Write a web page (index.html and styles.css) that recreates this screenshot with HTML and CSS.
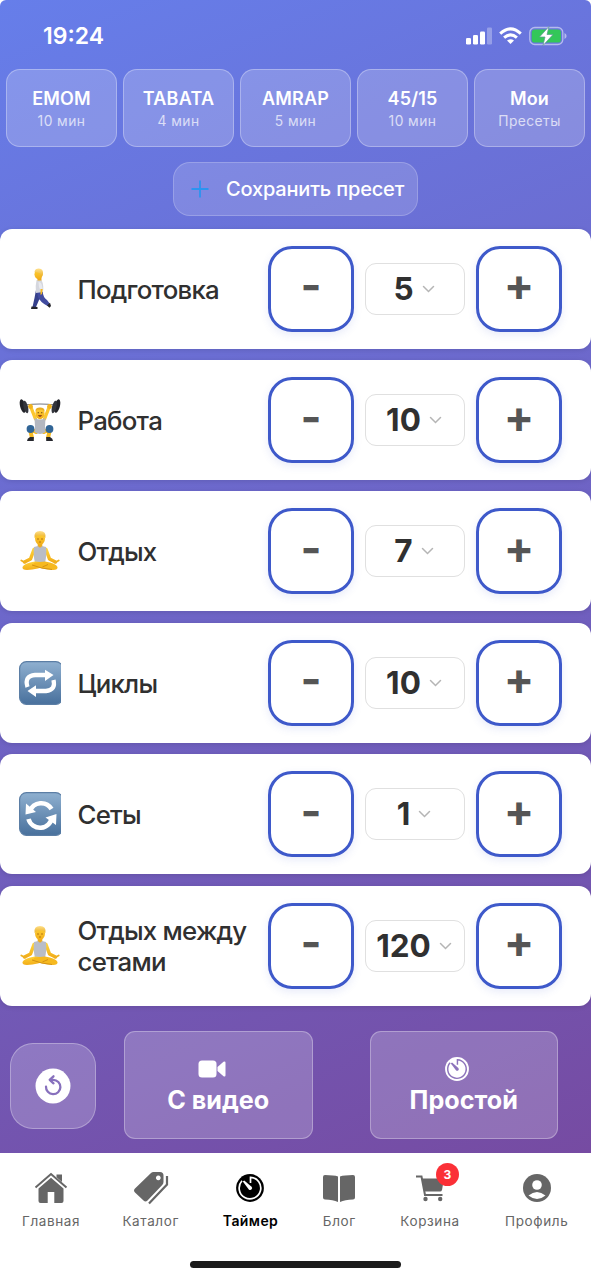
FILE: index.html
```html
<!DOCTYPE html>
<html lang="ru">
<head>
<meta charset="utf-8">
<title>Таймер</title>
<link rel="stylesheet" href="styles.css">
</head>
<body>
<svg class="defs" width="0" height="0" aria-hidden="true">
  <defs>
    <linearGradient id="blue" x1="0" y1="0" x2="0" y2="1"><stop offset="0" stop-color="#8fb0d0"/><stop offset="1" stop-color="#48709c"/></linearGradient>
    <linearGradient id="skin" x1="0" y1="0" x2="0" y2="1"><stop offset="0" stop-color="#ffd238"/><stop offset="1" stop-color="#f2ad18"/></linearGradient>
    <linearGradient id="hair" x1="0" y1="0" x2="0" y2="1"><stop offset="0" stop-color="#ffe08a"/><stop offset="1" stop-color="#e9ad22"/></linearGradient>
    <symbol id="walk" viewBox="0 0 42 42">
      <path d="M17 22 H23.500 Q24 28 20 32 L17 39 H13.500 L15.500 30 Z" fill="#35408c"/>
      <path d="M18 24 H23.700 Q24 29 28 32 L31 36 L28.500 38 Q21 34 19 29 Z" fill="#414b9f"/>
      <path d="M12.500 38.500 L18.500 39 V41 H12 Z M28 37.500 L31 34.800 L32 38 L30.500 39.800 Z" fill="#25252b"/>
      <path d="M17.500 12.500 Q20 10 22.500 12 Q25 17 24 24 L17 25 Q16 18 17.500 12.500Z" fill="#d5d7de"/>
      <path d="M19.500 14 Q22.500 14 23 18 L24 23 L21.500 23 L20 19 Z" fill="#e8e9ee"/>
      <path d="M21.500 21 H23.700 L23 26 L21.500 27 Z" fill="#f4b822"/>
      <rect x="18.500" y="9" width="4" height="3.500" fill="#eda91c"/>
      <ellipse cx="19.500" cy="6.200" rx="4" ry="5" fill="url(#skin)"/>
      <path d="M15.500 4 Q16 .5 20 .6 Q24.500 1 24 6 Q23.700 8 22.500 9 L21.200 5.500 L18 4.300 Z" fill="url(#hair)"/>
    </symbol>
    <symbol id="lift" viewBox="0 0 42 42">
      <path d="M5 6 Q21 4 37 6" fill="none" stroke="#747780" stroke-width="1.200"/>
      <path d="M12 8.500 L16.500 20 M30 8.500 L25.500 20" fill="none" stroke="#fcc72e" stroke-width="3.400" stroke-linecap="round"/>
      <path d="M17 33 L11 30 L13 39 M25 33 L31 30 L29 39" fill="none" stroke="#f6b91f" stroke-width="4" stroke-linecap="round" stroke-linejoin="round"/>
      <path d="M15.500 19 Q21 22 26.500 19 L26 28 L26.500 33 Q21 37 15.500 33 L16 28Z" fill="#b3b7c0"/>
      <circle cx="11.500" cy="30" r="3.900" fill="#316596"/><circle cx="30.500" cy="30" r="3.900" fill="#316596"/>
      <ellipse cx="21" cy="14.500" rx="4.600" ry="5.700" fill="url(#skin)"/>
      <path d="M16.500 12.500 Q16 8.500 21 8.400 Q26 8.500 25.500 12.500 L23 10.800 H18.500Z" fill="#e9ad22"/>
      <path d="M18.800 16 Q21 20 23.200 16Z" fill="#9a4a18"/><circle cx="19.200" cy="13.700" r=".6" fill="#5d3a12"/><circle cx="22.800" cy="13.700" r=".6" fill="#5d3a12"/>
      <circle cx="11.500" cy="7.500" r="2.400" fill="#f1b31e"/><circle cx="30.500" cy="7.500" r="2.400" fill="#f1b31e"/>
      <ellipse cx="3.800" cy="7" rx="2.700" ry="7" transform="rotate(-14 3.800 7)" fill="#222329"/><ellipse cx="6.800" cy="8" rx="2.200" ry="6.500" transform="rotate(-14 6.800 8)" fill="#33353c"/>
      <ellipse cx="38.200" cy="7" rx="2.700" ry="7" transform="rotate(14 38.200 7)" fill="#222329"/><ellipse cx="35.200" cy="8" rx="2.200" ry="6.500" transform="rotate(14 35.200 8)" fill="#33353c"/>
      <path d="M8 42 Q8 39.500 11 38 H14.800 V42Z M34 42 Q34 39.500 31 38 H27.200 V42Z" fill="#26272d"/>
    </symbol>
    <symbol id="yoga" viewBox="0 0 42 42">
      <path d="M15 19.500 L11.500 29 L5.500 32 M27 19.500 L30.500 29 L36.500 32" fill="none" stroke="url(#skin)" stroke-width="3.500" stroke-linecap="round" stroke-linejoin="round"/>
      <path d="M2.300 30.500 L6 32.500 M39.700 30.500 L36 32.500" stroke="#eeb020" stroke-width="1.800" stroke-linecap="round"/>
      <rect x="18.700" y="12" width="4.600" height="6" fill="#eeac1d"/>
      <path d="M15 17 L19 16 Q21 19 23 16 L27 17 Q28 24 26 33 H16 Q14 24 15 17Z" fill="#b9bdc7"/>
      <path d="M16 31.500 Q5 33 3.500 37 Q3 40 8 40 Q19 39.500 29 35 L26 32.500 Z" fill="url(#skin)"/>
      <path d="M26 31.500 Q37 33 38.500 37 Q39 40 34 40 Q23 39.500 13 35 L16 32.500 Z" fill="#f6b91f"/>
      <path d="M13 35 Q23 39 33 39.500 M29 34.500 Q26 36 23.500 36.800" fill="none" stroke="#c98712" stroke-width=".8"/>
      <ellipse cx="21" cy="8.500" rx="5" ry="6.300" fill="url(#skin)"/>
      <path d="M15.600 8 Q14.500 1 21 1 Q27.500 1 26.400 8 L24 5.500 H18Z" fill="url(#hair)"/>
      <path d="M18 9 H20 M22 9 H24 M20 12 H22" stroke="#a5660f" stroke-width=".8"/>
    </symbol>
    <symbol id="repeat" viewBox="0 0 42 44">
      <rect x=".6" y=".6" width="43" height="42.800" rx="7" fill="url(#blue)" stroke="#5b7ea5" stroke-width="1.200"/>
      <path d="M8.500 26 Q5 15 16 14 H27 M34.500 19 Q37 29 27 30 H16" fill="none" stroke="#fff" stroke-width="4.300"/>
      <path d="M26 8.700 L34.500 14 L26 20Z M17 24.200 L8.500 30 L17 36Z" fill="#fff"/>
    </symbol>
    <symbol id="cycle" viewBox="0 0 42 44">
      <rect x=".6" y=".6" width="43" height="42.800" rx="7" fill="url(#blue)" stroke="#5b7ea5" stroke-width="1.200"/>
      <path d="M11 19 A12 12 0 0 1 32.500 17 M33 25 A12 12 0 0 1 9.500 27" fill="none" stroke="#fff" stroke-width="4.600"/>
      <path d="M7 11.500 L6.500 22.500 L17 20Z M37.500 22 L26.500 25.500 L37 33Z" fill="#fff"/>
    </symbol>
    <symbol id="chev" viewBox="0 0 12 8"><path d="M1 1.500 L6 6.500 L11 1.500" fill="none" stroke="#b5b5b5" stroke-width="1.500" stroke-linecap="round"/></symbol>
    <symbol id="dial" viewBox="0 0 28 28">
      <circle class="face" cx="14" cy="14" r="13.900"/>
      <path class="mark" d="M14.500 9 V3.300 A10.800 10.800 0 1 1 6 6.800" fill="none" stroke-width="1.700"/>
      <path class="hand" d="M6.800 7.600 L8.200 6.500 L15.600 12.700 A2 2 0 0 1 13 15.700Z"/>
    </symbol>
  </defs>
</svg>

<main class="screen">
  <header class="status">
    <span class="time">19:24</span>
    <div class="indicators">
      <svg width="27" height="18" viewBox="0 0 27 18" fill="#fff"><rect x="0" y="11" width="5" height="6.500" rx="1.300"/><rect x="7" y="8" width="5" height="9.500" rx="1.300"/><rect x="14" y="4.500" width="5" height="13" rx="1.300"/><rect x="21" y=".5" width="5" height="17" rx="1.300" opacity=".3"/></svg>
      <svg width="23" height="18" viewBox="0 0 23 18" fill="none" stroke="#fff" stroke-width="3"><path d="M1.200 6.600 Q11.500 -2.800 21.800 6.600"/><path d="M5.100 10.700 Q11.500 5 17.900 10.700"/><path d="M11.500 17 L8 13.600 Q11.500 10.800 15 13.600Z" fill="#fff" stroke="none"/></svg>
      <svg width="38" height="20" viewBox="0 0 38 20"><rect x=".8" y="1.500" width="33" height="17" rx="5" fill="none" stroke="#fff" stroke-opacity=".5" stroke-width="1.300"/><rect x="2.700" y="3.400" width="29.200" height="13.200" rx="3.200" fill="#33c759"/><path d="M35.500 7 Q37.600 8 37.600 10 Q37.600 12 35.500 13Z" fill="#fff" opacity=".5"/><path d="M20 .5 L10.500 11 H16 L14 19.500 L24 8.500 H18Z" fill="#fff" stroke="#5b9a93" stroke-width=".7"/></svg>
    </div>
  </header>

  <section class="presets">
    <button class="preset"><b>EMOM</b><span>10 мин</span></button>
    <button class="preset"><b>TABATA</b><span>4 мин</span></button>
    <button class="preset"><b>AMRAP</b><span>5 мин</span></button>
    <button class="preset"><b>45/15</b><span>10 мин</span></button>
    <button class="preset"><b>Мои</b><span>Пресеты</span></button>
  </section>

  <button class="save"><svg width="18" height="18" viewBox="0 0 18 18"><path d="M9 .5 V17.500 M.5 9 H17.500" stroke="#2b94f0" stroke-width="1.800"/></svg><span>Сохранить пресет</span></button>

  <section class="cards">
    <div class="card"><svg class="emoji"><use href="#walk"/></svg><span class="label">Подготовка</span><button class="step">-</button><div class="value"><b>5</b><svg><use href="#chev"/></svg></div><button class="step">+</button></div>
    <div class="card"><svg class="emoji"><use href="#lift"/></svg><span class="label">Работа</span><button class="step">-</button><div class="value"><b>10</b><svg><use href="#chev"/></svg></div><button class="step">+</button></div>
    <div class="card"><svg class="emoji"><use href="#yoga"/></svg><span class="label">Отдых</span><button class="step">-</button><div class="value"><b>7</b><svg><use href="#chev"/></svg></div><button class="step">+</button></div>
    <div class="card"><svg class="emoji tile"><use href="#repeat"/></svg><span class="label">Циклы</span><button class="step">-</button><div class="value"><b>10</b><svg><use href="#chev"/></svg></div><button class="step">+</button></div>
    <div class="card"><svg class="emoji tile"><use href="#cycle"/></svg><span class="label">Сеты</span><button class="step">-</button><div class="value"><b>1</b><svg><use href="#chev"/></svg></div><button class="step">+</button></div>
    <div class="card"><svg class="emoji"><use href="#yoga"/></svg><span class="label">Отдых между сетами</span><button class="step">-</button><div class="value"><b>120</b><svg><use href="#chev"/></svg></div><button class="step">+</button></div>
  </section>

  <section class="actions">
    <button class="reset"><svg width="36" height="36" viewBox="0 0 36 36"><circle cx="18" cy="18" r="17.500" fill="#fff"/><path d="M11 18.600 A7.200 7.200 0 1 0 18.200 11.800 H15.500" fill="none" stroke="#8770bd" stroke-width="2.300" stroke-linecap="round"/><path d="M18.500 8.300 L14.700 11.800 L18.500 15.300" fill="none" stroke="#8770bd" stroke-width="2.300" stroke-linecap="round" stroke-linejoin="round"/></svg></button>
    <button class="start"><svg width="28" height="24" viewBox="0 0 28 24" fill="#fff"><rect x=".5" y="3.500" width="18" height="17" rx="3.500"/><path d="M19.500 10 L25.500 4.800 Q27.500 3.800 27.500 5.800 V18.200 Q27.500 20.200 25.500 19.200 L19.500 14Z"/></svg><span>С видео</span></button>
    <button class="start second"><svg class="dial" width="24" height="24"><use href="#dial"/></svg><span>Простой</span></button>
  </section>
</main>

<nav class="tabs">
  <a class="tab"><svg width="34" height="32" viewBox="0 0 34 32" fill="#666"><path d="M1.500 15.500 L17 2 L32.500 15.500" fill="none" stroke="#666" stroke-width="2"/><path d="M22.500 2.500 H28 V10 L22.500 5.200Z"/><path d="M17 5.800 L29.500 16.500 V29 Q29.500 31 27.500 31 H20.300 V20 H13.700 V31 H6.500 Q4.500 31 4.500 29 V16.500Z"/></svg><span>Главная</span></a>
  <a class="tab"><svg width="36" height="34" viewBox="0 0 36 34"><path fill="#666" fill-rule="evenodd" d="M18 2 Q19 1 20.500 1 H27 Q30.500 1 30.500 4.500 V11 Q30.500 13 29 14.300 L14.500 29.500 Q12.500 31.500 10.500 29.500 L2 21.500 Q0 19.500 2 17.500Z M25.300 4.500 a2.400 2.400 0 1 0 .01 0Z"/><path d="M34 5 V13.500 L16 32.500" fill="none" stroke="#666" stroke-width="2.200"/></svg><span>Каталог</span></a>
  <a class="tab active"><svg class="dial" width="28" height="28"><use href="#dial"/></svg><span>Таймер</span></a>
  <a class="tab"><svg width="34" height="30" viewBox="0 0 34 30" fill="#666"><path d="M1 4 Q1 2 3 2 Q12 2 16 3.500 V29 Q11 26.500 3 26.500 Q1 26.500 1 24.500Z M18 3.500 Q22 2 31 2 Q33 2 33 4 V24.500 Q33 26.500 31 26.500 Q23 26.500 18 29Z"/></svg><span>Блог</span></a>
  <a class="tab"><div class="cart"><svg width="28" height="28" viewBox="0 0 28 28"><path d="M0 2.500 H5.500 L9 21 H26.500" fill="none" stroke="#666" stroke-width="2"/><path d="M6 4.500 H28 L26 16 Q25.500 17.500 24 17.500 H8.500Z" fill="#666"/><circle cx="9.500" cy="25" r="2.200" fill="#666"/><circle cx="24.200" cy="25" r="2.200" fill="#666"/></svg><i class="badge">3</i></div><span>Корзина</span></a>
  <a class="tab"><svg width="28" height="28" viewBox="0 0 28 28"><circle cx="14" cy="14" r="14" fill="#666"/><circle cx="14" cy="11" r="4.800" fill="#fff"/><path d="M5.500 21.500 Q14 14.500 22.500 21.500 Q14 28.500 5.500 21.500Z" fill="#fff"/></svg><span>Профиль</span></a>
  <div class="home-bar"></div>
</nav>
</body>
</html>
```
FILE: styles.css
```css
* { box-sizing: border-box; }
html { background: #fff; }
body { margin: 0; width: 591px; height: 1280px; overflow: hidden; background: #fff; font-family: Inter, "Noto Sans", sans-serif; }
button { font: inherit; padding: 0; margin: 0; color: #fff; }
svg { display: block; flex: none; }
.defs { position: absolute; }

.screen { height: 1153px; display: flex; flex-direction: column; background: linear-gradient(158deg, #667eea 0%, #764ba2 100%); border-radius: 6px 6px 0 0; }

.status { height: 69px; flex: none; display: flex; justify-content: space-between; padding: 22px 24.500px 0 43px; color: #fff; }
.time { font-size: 23px; line-height: 28px; font-weight: 600; }
.indicators { display: flex; align-items: center; height: 28px; gap: 6.500px; }

.presets { display: grid; grid-template-columns: repeat(5, 1fr); gap: 6px; padding: 0 6px; flex: none; }
.preset { height: 78px; display: flex; flex-direction: column; align-items: center; justify-content: center; padding-top: 4px; border: 1.400px solid rgba(255,255,255,.3); border-radius: 14px; background: rgba(255,255,255,.2); }
.preset b { font-size: 18px; line-height: 22px; font-weight: 600; letter-spacing: .2px; }
.preset span { font-size: 13.800px; line-height: 22px; letter-spacing: .45px; opacity: .7; }

.save { width: 245px; height: 54px; flex: none; align-self: center; margin-top: 15px; display: flex; align-items: center; padding-left: 17px; gap: 17px; border: 1.400px solid rgba(255,255,255,.2); border-radius: 17px; background: rgba(255,255,255,.15); font-size: 20px; font-weight: 500; letter-spacing: -.18px; white-space: nowrap; }

.cards { display: flex; flex-direction: column; gap: 11.400px; margin-top: 12.700px; }
.card { height: 120px; display: flex; align-items: center; padding: 0 29px 0 19px; border-radius: 12px; background: #fff; box-shadow: 0 1px 5px rgba(0,0,0,.12); }
.emoji { width: 42px; height: 42px; margin-right: 16.500px; }
.tile { height: 44px; }
.label { flex: 1; min-width: 0; padding-top: 1px; font-size: 25.800px; line-height: 31px; font-weight: 450; letter-spacing: -.75px; color: #303030; }
.step { width: 86px; height: 86px; flex: none; padding-bottom: 7px; border: 3px solid #3e59ca; border-radius: 24px; background: #fff; color: #555; font-size: 45px; line-height: 40px; font-weight: 700; box-shadow: 0 3px 9px rgba(62,89,202,.12); }
.value { width: 100px; height: 52px; flex: none; margin: 0 11px; display: flex; align-items: center; justify-content: center; gap: 8px; padding-right: 2px; border: 1.400px solid #e0e0e0; border-radius: 11px; background: #fff; }
.value b { font-size: 31.500px; line-height: 36px; font-weight: 700; color: #303030; }
.value svg { width: 13px; height: 8px; }

.actions { display: flex; align-items: center; margin-top: 25.500px; padding-left: 10px; }
.reset, .start { display: flex; align-items: center; justify-content: center; border: 1.400px solid rgba(255,255,255,.3); background: rgba(255,255,255,.2); }
.reset { width: 86px; height: 86px; margin-top: 1px; border-radius: 23px; }
.start { width: 188.500px; height: 108px; margin-left: 28px; padding-top: 3px; flex-direction: column; gap: 3px; border-radius: 11px; font-size: 25.200px; line-height: 32px; font-weight: 700; }
.start.second { margin-left: 57px; }
.start svg { margin-right: 13px; }
.dial { overflow: visible; --ink: #fff; --gap: #8c73bb; }
.face { fill: var(--ink); }
.mark { stroke: var(--gap); }
.hand { fill: var(--gap); }

.tabs { position: relative; height: 127px; display: flex; justify-content: space-between; align-items: flex-start; padding: 18px 23px 0 22px; background: #fff; }
.tab { height: 59px; display: flex; flex-direction: column; align-items: center; color: #666; font-size: 13.500px; line-height: 18px; letter-spacing: .6px; }
.tab > svg, .cart { margin: auto; }
.tab > span { margin: 7px -0.300px 0 0; }
.tab:nth-child(n+2):nth-child(-n+5) { margin-left: -1.500px; margin-right: 1.500px; }
.tab.active { color: #000; font-size: 14px; font-weight: 600; letter-spacing: .4px; }
.active .dial { --ink: #000; --gap: #fff; }
.cart { position: relative; }
.badge { position: absolute; left: 20px; top: -11px; width: 23px; height: 23px; border-radius: 50%; background: #fb3037; color: #fff; font-size: 12px; line-height: 23px; font-weight: 700; font-style: normal; letter-spacing: 0; text-align: center; }
.home-bar { position: absolute; left: 190px; top: 108px; width: 211px; height: 7px; border-radius: 4px; background: #1b1b1b; }
```
